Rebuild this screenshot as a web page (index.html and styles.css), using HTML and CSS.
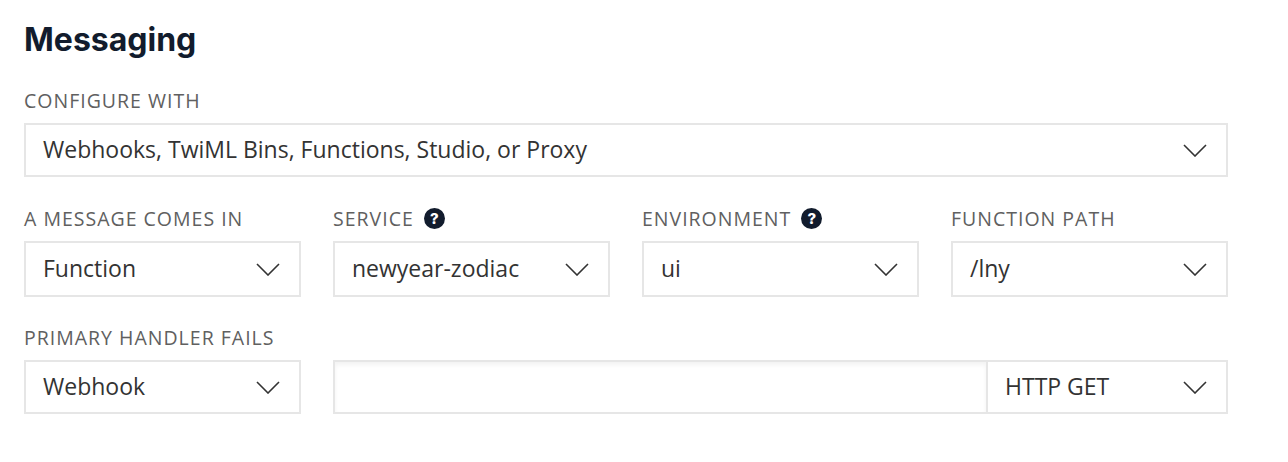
FILE: index.html
```html
<!DOCTYPE html>
<html>
<head>
<meta charset="utf-8">
<link rel="stylesheet" href="styles.css">
</head>
<body>
<div class="page">
  <h1 class="title">Messaging</h1>

  <div class="field">
    <div class="label">Configure with</div>
    <div class="select">
      <span class="value">Webhooks, TwiML Bins, Functions, Studio, or Proxy</span>
      <svg class="chev" width="24" height="13" viewBox="0 0 24 13"><path d="M1 1 L12 12 L23 1" fill="none" stroke="#333" stroke-width="1.6"/></svg>
    </div>
  </div>

  <div class="row">
    <div class="field">
      <div class="label">A message comes in</div>
      <div class="select">
        <span class="value">Function</span>
        <svg class="chev" width="24" height="13" viewBox="0 0 24 13"><path d="M1 1 L12 12 L23 1" fill="none" stroke="#333" stroke-width="1.6"/></svg>
      </div>
    </div>
    <div class="field">
      <div class="label">Service <span class="help">?</span></div>
      <div class="select">
        <span class="value">newyear-zodiac</span>
        <svg class="chev" width="24" height="13" viewBox="0 0 24 13"><path d="M1 1 L12 12 L23 1" fill="none" stroke="#333" stroke-width="1.6"/></svg>
      </div>
    </div>
    <div class="field">
      <div class="label">Environment <span class="help">?</span></div>
      <div class="select">
        <span class="value">ui</span>
        <svg class="chev" width="24" height="13" viewBox="0 0 24 13"><path d="M1 1 L12 12 L23 1" fill="none" stroke="#333" stroke-width="1.6"/></svg>
      </div>
    </div>
    <div class="field">
      <div class="label">Function path</div>
      <div class="select">
        <span class="value">/lny</span>
        <svg class="chev" width="24" height="13" viewBox="0 0 24 13"><path d="M1 1 L12 12 L23 1" fill="none" stroke="#333" stroke-width="1.6"/></svg>
      </div>
    </div>
  </div>

  <div class="row row3">
    <div class="field">
      <div class="label">Primary handler fails</div>
      <div class="select">
        <span class="value">Webhook</span>
        <svg class="chev" width="24" height="13" viewBox="0 0 24 13"><path d="M1 1 L12 12 L23 1" fill="none" stroke="#333" stroke-width="1.6"/></svg>
      </div>
    </div>
    <div class="field span3">
      <div class="label">&nbsp;</div>
      <div class="combo">
        <div class="textinput"></div>
        <div class="select method">
          <span class="value">HTTP GET</span>
          <svg class="chev" width="24" height="13" viewBox="0 0 24 13"><path d="M1 1 L12 12 L23 1" fill="none" stroke="#333" stroke-width="1.6"/></svg>
        </div>
      </div>
    </div>
  </div>
</div>
</body>
</html>
```
FILE: styles.css
```css
* { box-sizing: border-box; }
body {
  margin: 0;
  background: #fff;
  font-family: "Open Sans", "Liberation Sans", sans-serif;
}
.page {
  padding: 18px 60px 0 24px;
}
.title {
  margin: 0 0 28px;
  font-family: "Inter", "Liberation Sans", sans-serif;
  font-size: 32px;
  line-height: 44px;
  font-weight: 700;
  color: #121c2d;
}
.field {
  display: flex;
  flex-direction: column;
}
.label {
  display: flex;
  align-items: center;
  gap: 10px;
  height: 20px;
  margin-bottom: 13px;
  font-size: 19.5px;
  font-weight: 500;
  letter-spacing: 1px;
  text-transform: uppercase;
  color: #606060;
}
.help {
  display: inline-flex;
  align-items: center;
  justify-content: center;
  width: 21px;
  height: 21px;
  border-radius: 50%;
  background: #121c2d;
  color: #fff;
  font-family: "Inter", sans-serif;
  font-size: 15px;
  font-weight: 800;
  letter-spacing: 0;
}
.select {
  display: flex;
  align-items: center;
  justify-content: space-between;
  height: 54px;
  padding: 0 19px 2px 17px;
  border: 2px solid #e6e6e6;
  background: #fff;
  font-size: 23px;
  color: #333;
}
.chev {
  margin-top: 2px;
}
.row {
  display: grid;
  grid-template-columns: repeat(4, 1fr);
  gap: 32px;
  margin-top: 31px;
}
.row .select {
  height: 56px;
}
.row3 {
  margin-top: 30px;
}
.row3 .select {
  height: 54px;
}
.span3 {
  grid-column: span 3;
}
.combo {
  display: flex;
}
.textinput {
  flex: 1;
  height: 54px;
  border: 2px solid #e6e6e6;
  box-shadow: inset 0 3px 4px rgba(0,0,0,0.05);
}
.method {
  width: 240px;
  border-left: 0;
}
```
